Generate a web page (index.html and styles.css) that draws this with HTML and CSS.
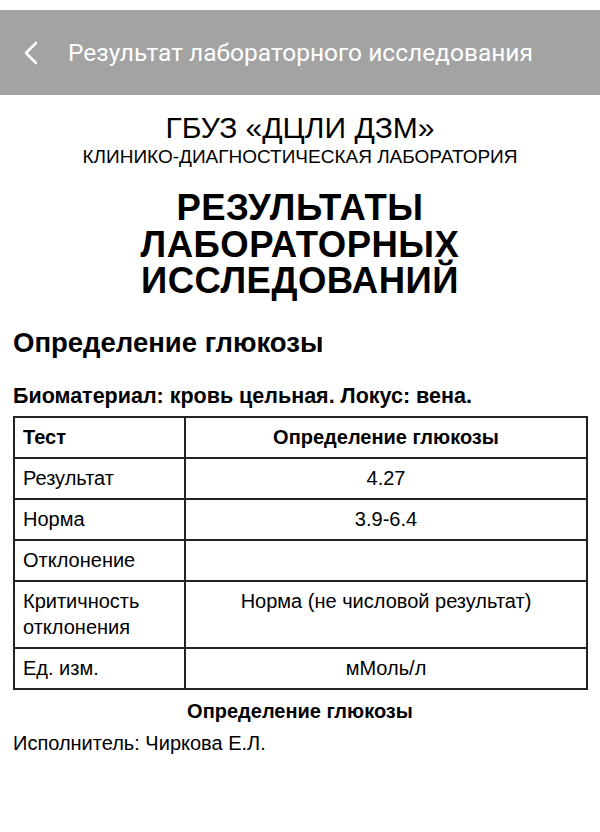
FILE: index.html
```html
<!DOCTYPE html>
<html lang="ru">
<head>
<meta charset="utf-8">
<link rel="stylesheet" href="styles.css">
</head>
<body>
<header class="appbar">
  <svg class="back" width="16" height="24" viewBox="0 0 16 24"><path d="M13 2 L3 12 L13 22" fill="none" stroke="#fff" stroke-width="2.6" stroke-linecap="round" stroke-linejoin="round"/></svg>
  <span class="appbar-title">Результат лабораторного исследования</span>
</header>
<main class="doc">
  <div class="org">ГБУЗ «ДЦЛИ ДЗМ»</div>
  <div class="lab">КЛИНИКО-ДИАГНОСТИЧЕСКАЯ ЛАБОРАТОРИЯ</div>
  <h1 class="big">РЕЗУЛЬТАТЫ<br>ЛАБОРАТОРНЫХ<br>ИССЛЕДОВАНИЙ</h1>
  <h2 class="test-name">Определение глюкозы</h2>
  <p class="bio">Биоматериал: кровь цельная. Локус: вена.</p>
  <table class="res">
    <tr><th class="c1">Тест</th><th class="c2">Определение глюкозы</th></tr>
    <tr><td class="c1">Результат</td><td class="c2">4.27</td></tr>
    <tr><td class="c1">Норма</td><td class="c2">3.9-6.4</td></tr>
    <tr><td class="c1">Отклонение</td><td class="c2"></td></tr>
    <tr><td class="c1">Критичность отклонения</td><td class="c2">Норма (не числовой результат)</td></tr>
    <tr><td class="c1">Ед. изм.</td><td class="c2">мМоль/л</td></tr>
  </table>
  <div class="foot-name">Определение глюкозы</div>
  <div class="performer">Исполнитель: Чиркова Е.Л.</div>
</main>
</body>
</html>
```
FILE: styles.css
```css
html, body { margin: 0; padding: 0; background: #fff; }
body { font-family: "Liberation Sans", Arial, sans-serif; color: #000; padding-top: 10px; }
.appbar {
  height: 85px;
  background: #a3a3a3;
  display: flex;
  align-items: center;
  padding-left: 23px;
  box-sizing: border-box;
}
.back { display: block; margin-right: 29px; }
.appbar-title {
  font-family: Roboto, "Noto Sans", sans-serif;
  color: #fff;
  font-size: 24.5px;
}
.doc { padding: 0 13px; }
.org { text-align: center; font-size: 30px; line-height: 34px; margin-top: 16px; }
.lab { text-align: center; font-size: 19px; line-height: 22px; margin-top: 1px; }
.big {
  text-align: center;
  font-size: 36.5px;
  line-height: 36.6px;
  letter-spacing: 0.5px;
  font-weight: bold;
  margin: 22px 0 0 0;
}
.test-name { font-size: 27.5px; font-weight: bold; margin: 27px 0 0 0; line-height: 32px; }
.bio { font-size: 21.5px; font-weight: bold; margin: 24px 0 0 0; line-height: 26px; }
.res {
  border-collapse: collapse;
  width: 575px;
  margin-top: 7px;
  font-size: 20px;
}
.res th, .res td {
  border: 2px solid #222;
  padding: 6px 8px 7px 8px;
  line-height: 26px;
  vertical-align: top;
}
.res th { font-weight: bold; }
.res .c1 { width: 153px; text-align: left; }
.res .c2 { text-align: center; }
.foot-name { text-align: center; font-weight: bold; font-size: 20px; margin-top: 9px; line-height: 24px; }
.performer { font-size: 20px; margin-top: 8px; line-height: 24px; }
```
